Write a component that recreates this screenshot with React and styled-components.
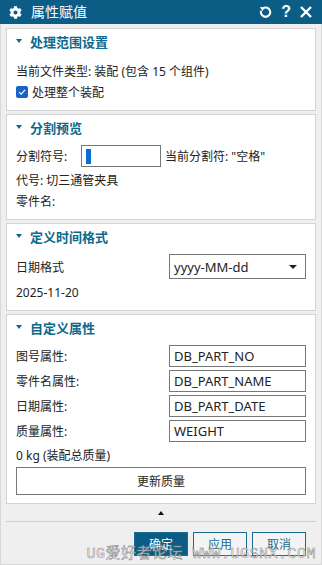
import React from "react";
import styled, { createGlobalStyle } from "styled-components";
import { FaCog } from "react-icons/fa";

const GlobalStyle = createGlobalStyle`
  body {
    margin: 0;
    background: #efefef;
    font-family: "Noto Sans", "Noto Sans CJK SC", sans-serif;
    font-size: 12px;
    color: #222;
  }
`;

const Window = styled.div`
  position: relative;
  width: 322px;
  height: 565px;
  display: flex;
  flex-direction: column;
  background: #efefef;
  overflow: hidden;
`;

const TitleBar = styled.div`
  height: 24px;
  flex: none;
  background: #0c5d86;
  display: flex;
  align-items: center;
  padding: 0 10px 0 9px;
  color: #fff;
`;

const Title = styled.span`
  font-size: 14px;
  line-height: 24px;
  margin-left: 9px;
  flex: 1;
`;

const TitleTools = styled.div`
  display: flex;
  align-items: center;
  gap: 9px;
`;

const Help = styled.span`
  font-family: "Liberation Sans", sans-serif;
  font-weight: 700;
  font-size: 16px;
  line-height: 24px;
`;

const Body = styled.div`
  flex: 1;
  display: flex;
  flex-direction: column;
  gap: 3px;
  padding: 4px 5px 0;
  border: 1px solid #d8d8d8;
  border-top: none;
`;

const Section = styled.div`
  background: #fff;
  border: 1px solid #d3d3d3;
  padding: 0 9px 8px;
`;

const Header = styled.div`
  height: 24px;
  display: flex;
  align-items: center;
  gap: 8px;
  color: #0d6a8c;
  font-weight: 700;
  font-size: 13px;
`;

const Caret = styled.span`
  width: 0;
  height: 0;
  border-left: 3px solid transparent;
  border-right: 3px solid transparent;
  border-${(p) => (p.$up ? "bottom" : "top")}: 4px solid ${(p) => p.$color || "#0d6a8c"};
`;

const Row = styled.div`
  display: flex;
  align-items: center;
  height: ${(p) => p.$h || 20}px;
  margin-top: ${(p) => p.$mt || 0}px;
  justify-content: ${(p) => (p.$spread ? "space-between" : "flex-start")};
  gap: ${(p) => p.$gap || 0}px;
  white-space: nowrap;
`;

const Check = styled.span`
  width: 12px;
  height: 12px;
  border-radius: 2px;
  background: #1864c6;
  display: inline-flex;
  align-items: center;
  justify-content: center;
  margin-right: 4px;
`;

const TextInput = styled.div`
  box-sizing: border-box;
  width: ${(p) => p.$w || 137}px;
  height: ${(p) => p.$h || 22}px;
  border: 1px solid #787878;
  background: #fff;
  display: flex;
  align-items: center;
  padding-left: 4px;
  font-size: 13px;
  color: #222;
`;

const Cursor = styled.span`
  width: 5px;
  height: 15px;
  background: #0a6fd0;
`;

const DropArrow = styled.span`
  margin-left: auto;
  margin-right: 8px;
  width: 0;
  height: 0;
  border-left: 4px solid transparent;
  border-right: 4px solid transparent;
  border-top: 4px solid #222;
`;

const WideButton = styled.div`
  box-sizing: border-box;
  height: 28px;
  margin-top: 2px;
  border: 1px solid #787878;
  background: #fff;
  display: flex;
  align-items: center;
  justify-content: center;
`;

const Collapse = styled.div`
  height: 16px;
  display: flex;
  align-items: center;
  justify-content: center;
  border-bottom: 1px solid #d0d0d0;
  margin-top: -3px;
  padding-top: 1px;
`;

const Actions = styled.div`
  display: flex;
  justify-content: flex-end;
  gap: 5px;
  margin-top: 7px;
  padding-right: 10px;
`;

const ActionButton = styled.div`
  box-sizing: border-box;
  width: 54px;
  height: 24px;
  border: 1px solid #1b6a8f;
  background: ${(p) => (p.$primary ? "#0c5d86" : "#f4f4f4")};
  color: ${(p) => (p.$primary ? "#fff" : "#1b6a8f")};
  display: flex;
  align-items: center;
  justify-content: center;
`;

const Watermark = styled.div`
  position: absolute;
  right: 6px;
  bottom: 2px;
  font-family: "Liberation Mono", "Noto Sans CJK SC", monospace;
  font-size: 15px;
  letter-spacing: 0.5px;
  color: rgba(245, 245, 245, 0.75);
  -webkit-text-stroke: 0.45px #7a7a7a;
  white-space: nowrap;
  pointer-events: none;
`;

function RefreshIcon() {
  return (
    <svg width="13" height="13" viewBox="0 0 14 14">
      <path d="M4.2 2.6 A5 5 0 1 1 2.3 5.2" fill="none" stroke="#fff" strokeWidth="2.2" />
      <path d="M1 1.2 L6.2 1.6 L3.6 5.6 Z" fill="#fff" />
    </svg>
  );
}

function CloseIcon() {
  return (
    <svg width="12" height="12" viewBox="0 0 12 12">
      <path d="M1 1 L11 11 M11 1 L1 11" stroke="#fff" strokeWidth="2.4" />
    </svg>
  );
}

function SectionHeader({ children }) {
  return (
    <Header>
      <Caret />
      {children}
    </Header>
  );
}

const props = [
  ["图号属性:", "DB_PART_NO"],
  ["零件名属性:", "DB_PART_NAME"],
  ["日期属性:", "DB_PART_DATE"],
  ["质量属性:", "WEIGHT"],
];

export default function App() {
  return (
    <Window>
      <GlobalStyle />
      <TitleBar>
        <FaCog size={13} />
        <Title>属性赋值</Title>
        <TitleTools>
          <RefreshIcon />
          <Help>?</Help>
          <CloseIcon />
        </TitleTools>
      </TitleBar>
      <Body>
        <Section>
          <SectionHeader>处理范围设置</SectionHeader>
          <Row $mt={8}>当前文件类型: 装配 (包含 15 个组件)</Row>
          <Row $mt={1}>
            <Check>
              <svg width="8" height="8" viewBox="0 0 8 8">
                <path d="M1 4.2 L3.2 6.2 L7 1.8" fill="none" stroke="#fff" strokeWidth="1.1" />
              </svg>
            </Check>
            处理整个装配
          </Row>
        </Section>

        <Section>
          <SectionHeader>分割预览</SectionHeader>
          <Row $mt={6} $h={22}>
            <span style={{ width: 65 }}>分割符号:</span>
            <TextInput $w={80}>
              <Cursor />
            </TextInput>
            <span style={{ marginLeft: 4 }}>当前分割符: "空格"</span>
          </Row>
          <Row $mt={3}>代号: 切三通管夹具</Row>
          <Row $mt={1}>零件名:</Row>
        </Section>

        <Section>
          <SectionHeader>定义时间格式</SectionHeader>
          <Row $mt={6} $h={25} $spread>
            <span>日期格式</span>
            <TextInput $h={25}>
              yyyy-MM-dd
              <DropArrow />
            </TextInput>
          </Row>
          <Row $mt={3}>2025-11-20</Row>
        </Section>

        <Section>
          <SectionHeader>自定义属性</SectionHeader>
          {props.map(([label, value], i) => (
            <Row key={label} $mt={i === 0 ? 6 : 3} $h={22} $spread>
              <span>{label}</span>
              <TextInput>{value}</TextInput>
            </Row>
          ))}
          <Row $mt={3}>0 kg (装配总质量)</Row>
          <WideButton>更新质量</WideButton>
        </Section>

        <Collapse>
          <Caret $up $color="#111" />
        </Collapse>
        <Actions>
          <ActionButton $primary>确定</ActionButton>
          <ActionButton>应用</ActionButton>
          <ActionButton>取消</ActionButton>
        </Actions>
      </Body>
      <Watermark>UG爱好者论坛 WWW.UGSNX.COM</Watermark>
    </Window>
  );
}
